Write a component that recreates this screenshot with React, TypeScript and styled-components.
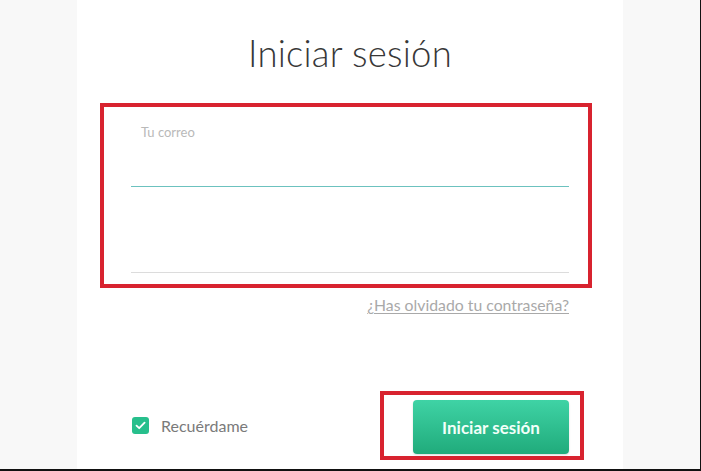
import React from "react";
import styled, { createGlobalStyle } from "styled-components";

const GlobalStyle = createGlobalStyle`
  html, body {
    margin: 0;
    padding: 0;
    background: #ffffff;
    font-family: Lato, "Open Sans", Arial, sans-serif;
  }
`;

const Page = styled.div`
  width: 700px;
  height: 469px;
  background: #f8f8f8;
  border-right: 1px solid #111;
  border-bottom: 2px solid #111;
  display: flex;
  justify-content: center;
  overflow: hidden;
`;

const Card = styled.div`
  width: 546px;
  height: 100%;
  background: #ffffff;
  box-sizing: border-box;
  padding: 32px 54px 0 54px;
  display: flex;
  flex-direction: column;
`;

const Title = styled.h1`
  margin: 0;
  text-align: center;
  font-family: Lato, "Open Sans", sans-serif;
  font-weight: 300;
  font-size: 36.5px;
  line-height: 43px;
  color: #383838;
  letter-spacing: 0.2px;
`;

const Highlight = styled.div<{ $left: number; $right: number }>`
  border: 4px solid #d8232f;
  margin-left: -${(p) => p.$left}px;
  margin-right: -${(p) => p.$right}px;
`;

const FieldsBox = styled(Highlight)`
  margin-top: 28px;
  padding: 17px 19px 11px 27px;
`;

const Field = styled.div<{ $h: number; $active?: boolean }>`
  height: ${(p) => p.$h}px;
  border-bottom: 1px solid ${(p) => (p.$active ? "#6cc2bf" : "#dcdcdc")};
  display: flex;
  flex-direction: column;
`;

const Label = styled.label`
  padding-left: 10px;
  font-size: 13px;
  line-height: 16px;
  color: #b9b9b9;
`;

const Input = styled.input`
  flex: 1;
  border: none;
  outline: none;
  background: transparent;
  font-family: inherit;
  font-size: 15px;
  color: #444;
`;

const ForgotLink = styled.a`
  align-self: flex-end;
  margin-top: 8px;
  font-size: 15.8px;
  line-height: 18px;
  color: #a9a9a9;
  text-decoration: underline;
  text-underline-offset: 2px;
`;

const BottomRow = styled.div`
  margin-top: 77px;
  display: flex;
  align-items: center;
  justify-content: space-between;
`;

const Remember = styled.label`
  display: flex;
  align-items: center;
  gap: 12px;
  padding-left: 1px;
  font-size: 16px;
  color: #7a7a7a;
`;

const CheckBox = styled.span`
  width: 17px;
  height: 17px;
  border-radius: 3px;
  background: #27bf8c;
  display: flex;
  align-items: center;
  justify-content: center;
`;

const ButtonBox = styled(Highlight)`
  padding: 5px 11px 2px 29px;
`;

const SubmitButton = styled.button`
  width: 156px;
  height: 54px;
  border: none;
  border-radius: 4px;
  background: linear-gradient(#3fd3a5, #20ab7b);
  box-shadow: 0 1px 2px rgba(0, 0, 0, 0.15);
  color: #f2fff9;
  font-family: Lato, "Open Sans", sans-serif;
  font-weight: 700;
  font-size: 17px;
  cursor: pointer;
`;

export default function App() {
  return (
    <>
      <GlobalStyle />
      <Page>
        <Card>
          <Title>Iniciar sesión</Title>
          <FieldsBox $left={31} $right={23}>
            <Field $h={62} $active>
              <Label>Tu correo</Label>
              <Input type="email" />
            </Field>
            <Field $h={85}>
              <Input type="password" />
            </Field>
          </FieldsBox>
          <ForgotLink href="#">¿Has olvidado tu contraseña?</ForgotLink>
          <BottomRow>
            <Remember>
              <CheckBox>
                <svg width="11" height="9" viewBox="0 0 11 9">
                  <path
                    d="M1.5 4.6 L4.2 7.2 L9.6 1.6"
                    fill="none"
                    stroke="#ffffff"
                    strokeWidth="1.8"
                    strokeLinecap="round"
                    strokeLinejoin="round"
                  />
                </svg>
              </CheckBox>
              Recuérdame
            </Remember>
            <ButtonBox $left={0} $right={15}>
              <SubmitButton>Iniciar sesión</SubmitButton>
            </ButtonBox>
          </BottomRow>
        </Card>
      </Page>
    </>
  );
}
